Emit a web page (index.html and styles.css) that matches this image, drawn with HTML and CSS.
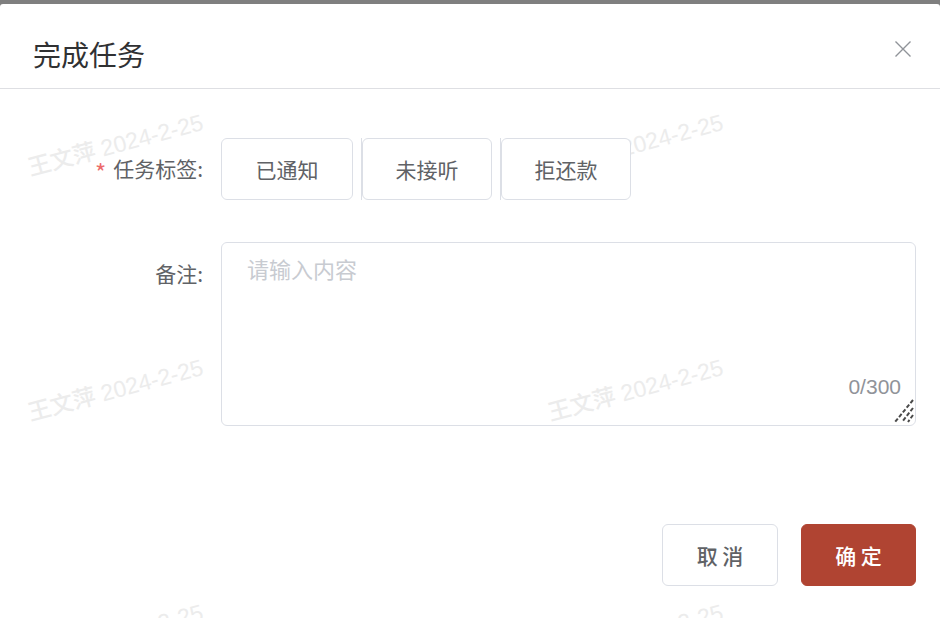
FILE: index.html
```html
<!DOCTYPE html>
<html lang="zh-CN">
<head>
<meta charset="utf-8">
<title>完成任务</title>
<link rel="stylesheet" href="styles.css">
</head>
<body>
<div class="overlay">
  <div class="dialog">
    <div class="watermarks" aria-hidden="true">
      <span class="wm" style="left:115px;top:139px">王文萍 2024-2-25</span>
      <span class="wm" style="left:635px;top:139px">王文萍 2024-2-25</span>
      <span class="wm" style="left:115px;top:384px">王文萍 2024-2-25</span>
      <span class="wm" style="left:635px;top:384px">王文萍 2024-2-25</span>
      <span class="wm" style="left:115px;top:629px">王文萍 2024-2-25</span>
      <span class="wm" style="left:635px;top:629px">王文萍 2024-2-25</span>
    </div>
    <header class="dlg-header">
      <h2 class="dlg-title">完成任务</h2>
      <button class="dlg-close" aria-label="关闭">
        <svg width="18" height="18" viewBox="0 0 18 18"><path d="M1.5 1.5 L16.5 16.5 M16.5 1.5 L1.5 16.5" stroke="#909399" stroke-width="1.4" fill="none"/></svg>
      </button>
    </header>
    <main class="dlg-body">
      <div class="form-row row-tags">
        <label class="form-label"><span class="req">*</span>任务标签:</label>
        <div class="tags">
          <button class="tag">已通知</button>
          <span class="tag-sep"><button class="tag">未接听</button></span>
          <span class="tag-sep"><button class="tag">拒还款</button></span>
        </div>
      </div>
      <div class="form-row row-note">
        <label class="form-label">备注:</label>
        <div class="note-box">
          <textarea class="note" placeholder="请输入内容"></textarea>
          <span class="counter">0/300</span>
          <svg class="grip" width="28" height="28" viewBox="0 0 28 28"><path d="M26 3 L8 25 M26 11 L15 25 M26 18 L21 25" stroke="#4a4a4a" stroke-width="2" stroke-dasharray="4 2" fill="none"/></svg>
        </div>
      </div>
    </main>
    <footer class="dlg-footer">
      <button class="btn btn-cancel">取 消</button>
      <button class="btn btn-ok">确 定</button>
    </footer>
  </div>
</div>
</body>
</html>
```
FILE: styles.css
```css
html, body {
  margin: 0;
  padding: 0;
}
body {
  width: 940px;
  height: 618px;
  overflow: hidden;
  font-family: "Noto Sans CJK SC", "Noto Sans", "Liberation Sans", sans-serif;
  background: #7f7f7f;
}
.overlay {
  padding-top: 4px;
  height: 614px;
}
.dialog {
  position: relative;
  background: #fff;
  height: 614px;
  border-radius: 3px 3px 0 0;
  overflow: hidden;
  display: flex;
  flex-direction: column;
}
.watermarks {
  position: absolute;
  inset: 0;
  pointer-events: none;
}
.wm {
  position: absolute;
  transform: translate(-50%, -50%) rotate(-15deg);
  white-space: nowrap;
  font-family: "Liberation Sans", "Noto Sans CJK SC", sans-serif;
  font-size: 23px;
  color: #ececec;
  font-weight: 500;
}
.dlg-header {
  position: relative;
  height: 85px;
  box-sizing: border-box;
  border-bottom: 1px solid #dedfe3;
  display: flex;
  align-items: center;
  justify-content: space-between;
  padding: 12px 28px 0 33px;
}
.dlg-title {
  margin: 0;
  font-size: 28px;
  font-weight: 400;
  color: #303133;
  line-height: 40px;
  padding-top: 3px;
}
.dlg-close {
  border: 0;
  background: transparent;
  padding: 0;
  width: 18px;
  height: 18px;
  display: flex;
  margin-bottom: 7px;
}
.dlg-body {
  position: relative;
  padding: 49px 24px 0 0;
  flex: 1;
}
.form-row {
  display: flex;
}
.form-label {
  width: 203px;
  padding-right: 18px;
  box-sizing: content-box;
  text-align: right;
  font-size: 21px;
  color: #606266;
  line-height: 30px;
}
.row-tags .form-label {
  padding-top: 15px;
}
.row-note {
  margin-top: 42px;
}
.row-note .form-label {
  padding-top: 16px;
}
.req {
  display: inline-block;
  color: #ec6b6b;
  margin-right: 7px;
  font-size: 24px;
  vertical-align: -5px;
}
.tags {
  display: flex;
}
.tag {
  width: 132px;
  height: 62px;
  box-sizing: border-box;
  border: 1px solid #dcdfe6;
  border-radius: 6px;
  background: #fff;
  font-family: inherit;
  font-size: 21px;
  color: #606266;
  padding: 0;
}
.tag-sep {
  display: flex;
  margin-left: 8px;
  border-left: 1px solid #dcdfe6;
}
.tag-sep .tag {
  width: 130px;
}
.note-box {
  position: relative;
  flex: 1;
  height: 184px;
}
.note {
  display: block;
  width: 100%;
  height: 100%;
  box-sizing: border-box;
  border: 1px solid #dcdfe6;
  border-radius: 6px;
  background: transparent;
  resize: none;
  padding: 9px 25px;
  font-family: inherit;
  font-size: 22px;
  line-height: 32px;
  color: #606266;
  outline: none;
}
.note::placeholder {
  color: #c8cbd1;
}
.counter {
  position: absolute;
  right: 15px;
  bottom: 27px;
  font-family: "Liberation Sans", sans-serif;
  font-size: 21px;
  color: #909399;
}
.grip {
  position: absolute;
  right: 1px;
  bottom: 1px;
}
.dlg-footer {
  position: relative;
  display: flex;
  justify-content: flex-end;
  gap: 23px;
  padding: 0 24px 32px 0;
}
.btn {
  width: 116px;
  height: 62px;
  box-sizing: border-box;
  border-radius: 6px;
  font-family: inherit;
  font-size: 21px;
  font-weight: 500;
  padding: 0;
}
.btn-cancel {
  background: #fff;
  border: 1px solid #dcdfe6;
  color: #606266;
}
.btn-ok {
  width: 115px;
  background: #b04432;
  border: 1px solid #b04432;
  color: #fff;
}
```
